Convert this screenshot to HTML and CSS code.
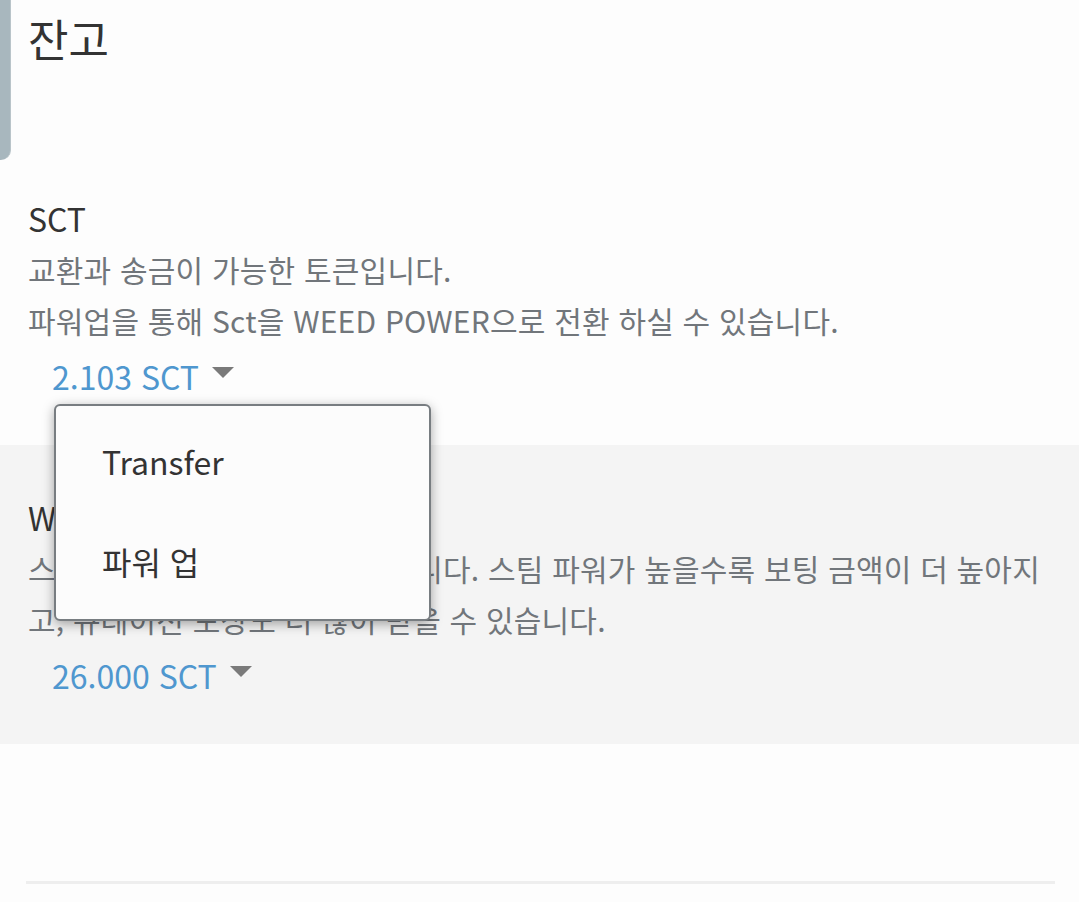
FILE: index.html
```html
<!DOCTYPE html>
<html lang="ko">
<head>
    <meta charset="UTF-8">
    <meta name="viewport" content="width=device-width, initial-scale=1.0">
    <title>잔고</title>
    <link rel="stylesheet" href="styles.css">
</head>
<body>
    <div class="side-tab"></div>
    <header class="page-head">
        <h1>잔고</h1>
    </header>
    <main>
        <section class="balance-row">
            <h2>SCT</h2>
            <p>교환과 송금이 가능한 토큰입니다.</p>
            <p>파워업을 통해 Sct을 WEED POWER으로 전환 하실 수 있습니다.</p>
            <div class="amount-wrap">
                <span class="amount">2.103 SCT</span><span class="caret"></span>
                <ul class="menu">
                    <li>Transfer</li>
                    <li>파워 업</li>
                </ul>
            </div>
        </section>
        <section class="balance-row shaded">
            <h2>WEED POWER</h2>
            <p>스팀 파워는 사용자의 영향력입니다. 스팀 파워가 높을수록 보팅 금액이 더 높아지고, 큐레이션 보상도 더 많이 받을 수 있습니다.</p>
            <div class="amount-wrap">
                <span class="amount">26.000 SCT</span><span class="caret"></span>
            </div>
        </section>
    </main>
    <div class="bottom-line"></div>
</body>
</html>
```

FILE: styles.css
```css
body {
    margin: 0;
    background-color: #fdfdfd;
    font-family: "Noto Sans CJK KR", "Noto Sans", sans-serif;
    color: #333;
}
.side-tab {
    position: absolute;
    left: 0;
    top: 0;
    width: 10px;
    height: 160px;
    background-color: #a8b7be;
    border-right: 1px solid #b9c4c9;
    border-bottom-right-radius: 10px;
}
.page-head {
    padding: 8px 28px 0;
    height: 146px;
    box-sizing: border-box;
}
.page-head h1 {
    margin: 0;
    font-size: 44px;
    font-weight: 400;
    line-height: 60px;
}
.balance-row {
    height: 299px;
    box-sizing: border-box;
    padding: 46px 28px 0;
}
.balance-row.shaded {
    background-color: #f4f4f4;
}
.balance-row h2 {
    margin: 0;
    font-size: 32px;
    font-weight: 400;
    line-height: 52px;
    color: #333;
}
.balance-row p {
    margin: 0;
    font-size: 30px;
    letter-spacing: 0.2px;
    line-height: 51px;
    color: #71767b;
}
.amount-wrap {
    position: relative;
    padding-left: 24px;
    margin-top: 5px;
    line-height: 50px;
}
.amount {
    font-size: 32px;
    color: #4f97cf;
}
.caret {
    display: inline-block;
    margin-left: 13px;
    border-left: 11px solid transparent;
    border-right: 11px solid transparent;
    border-top: 11px solid #7a7a7a;
    vertical-align: 12px;
}
.menu {
    position: absolute;
    left: 26px;
    top: 53px;
    width: 373px;
    margin: 0;
    padding: 5px 0 8px;
    list-style: none;
    background-color: #fcfcfc;
    border: 2px solid #787d81;
    border-radius: 6px;
    box-shadow: 0 3px 12px rgba(0, 0, 0, 0.35);
    z-index: 2;
}
.menu li {
    height: 100px;
    line-height: 100px;
    padding-left: 46px;
    font-size: 32px;
    color: #333;
}
.bottom-line {
    height: 3px;
    margin: 137px 24px 0 26px;
    background-color: #eeeeee;
}
```
